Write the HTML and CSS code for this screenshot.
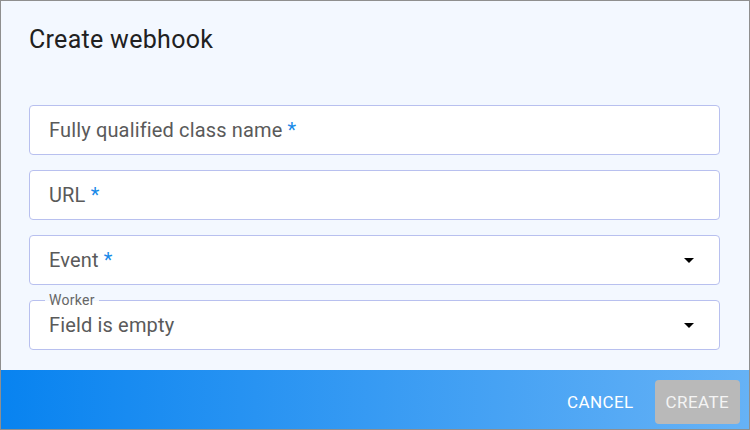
FILE: index.html
```html
<!DOCTYPE html>
<html>
<head>
<meta charset="utf-8">
<link rel="stylesheet" href="styles.css">
</head>
<body>
<div class="dialog">
  <div class="header">
    <h1 class="title">Create webhook</h1>
  </div>
  <div class="fields">
    <div class="field"><span class="ph">Fully qualified class name <span class="req">*</span></span></div>
    <div class="field"><span class="ph">URL <span class="req">*</span></span></div>
    <div class="field select"><span class="ph">Event <span class="req">*</span></span>
      <svg class="arrow" width="24" height="24" viewBox="0 0 24 24"><path d="M7 10l5 5 5-5z" fill="#000"/></svg>
    </div>
    <div class="field select outlined"><span class="legend">Worker</span><span class="ph">Field is empty</span>
      <svg class="arrow" width="24" height="24" viewBox="0 0 24 24"><path d="M7 10l5 5 5-5z" fill="#000"/></svg>
    </div>
  </div>
  <div class="footer">
    <button class="btn cancel">Cancel</button>
    <button class="btn create">Create</button>
  </div>
</div>
</body>
</html>
```
FILE: styles.css
```css
* { box-sizing: border-box; }
html, body { margin: 0; padding: 0; }
body { font-family: Roboto, "Liberation Sans", sans-serif; }
.dialog {
  width: 750px;
  height: 430px;
  border: 1px solid #8f8f8f;
  background: #f3f8ff;
  display: flex;
  flex-direction: column;
}
.header {
  height: 104px;
  padding: 24px 28px 0;
}
.title {
  margin: 0;
  font-size: 25px;
  font-weight: 400;
  line-height: 30px;
  letter-spacing: 0.3px;
  color: #212121;
}
.fields {
  display: flex;
  flex-direction: column;
  gap: 15px;
  padding: 0 29px 0 28px;
}
.field {
  position: relative;
  height: 50px;
  background: #fff;
  border: 1px solid #b8c0ef;
  border-radius: 4px;
  display: flex;
  align-items: center;
  padding-left: 19px;
}
.ph {
  font-size: 20px;
  color: #5a5a5a;
  line-height: 24px;
  letter-spacing: 0.15px;
}
.req { color: #1a8ae8; }
.arrow {
  position: absolute;
  right: 18px;
  top: 12px;
}
.legend {
  position: absolute;
  left: 15px;
  top: -9px;
  padding: 0 4px;
  font-size: 14px;
  line-height: 16px;
  letter-spacing: 0.3px;
  color: #666;
  background: linear-gradient(to bottom, #f3f8ff 0, #f3f8ff 9px, #fff 9px, #fff 100%);
}
.footer {
  margin-top: 20px;
  flex: 1;
  background: linear-gradient(to right, #0883f0, #66b2f6);
  display: flex;
  justify-content: flex-end;
  align-items: flex-start;
  padding: 10px 9px 0 0;
  gap: 10px;
}
.btn {
  font-family: Roboto, "Liberation Sans", sans-serif;
  font-size: 17px;
  text-transform: uppercase;
  letter-spacing: 0.4px;
  border: none;
  border-radius: 4px;
  height: 44px;
  padding: 0 11px;
  color: #fff;
  background: transparent;
}
.create {
  background: #b9b9b9;
  color: #f4f4f4;
}
```
